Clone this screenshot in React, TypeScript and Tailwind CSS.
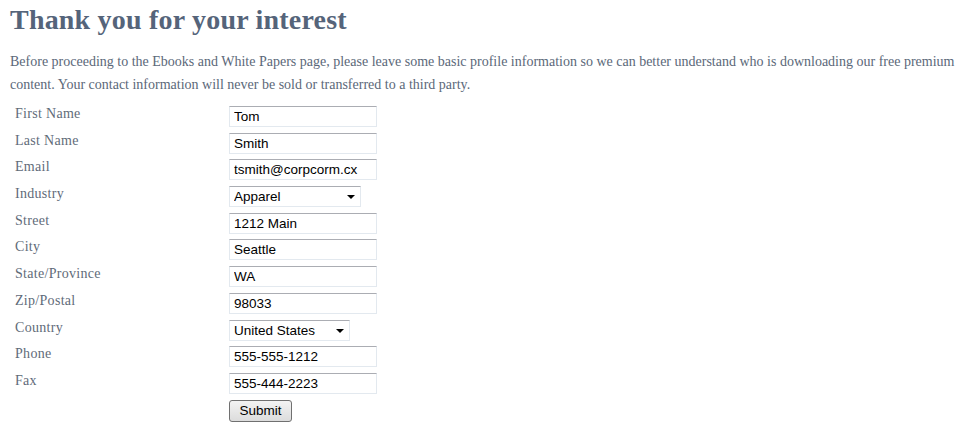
import React from "react";

const fields = [
  { label: "First Name", value: "Tom" },
  { label: "Last Name", value: "Smith" },
  { label: "Email", value: "tsmith@corpcorm.cx" },
  { label: "Industry", value: "Apparel", select: "w-[132px]" },
  { label: "Street", value: "1212 Main" },
  { label: "City", value: "Seattle" },
  { label: "State/Province", value: "WA" },
  { label: "Zip/Postal", value: "98033" },
  { label: "Country", value: "United States", select: "w-[121px]" },
  { label: "Phone", value: "555-555-1212" },
  { label: "Fax", value: "555-444-2223" },
];

const boxClass =
  "block h-[21px] border border-[#e3e9ef] border-t-[#abadb3] bg-white px-[4px] text-[13.5px] text-black outline-none font-['Liberation_Sans',Arial,sans-serif]";

const App = () => {
  return (
    <div className="min-h-[438px] w-[966px] bg-white font-['Liberation_Serif',serif] text-[#5b6879]">
      <div className="pl-[10px] pt-[3px]">
        <h1 className="text-[28px] font-bold leading-[34px] tracking-[0.2px] text-[#55647a]">
          Thank you for your interest
        </h1>
        <p className="mt-[13px] whitespace-nowrap text-[14px] leading-[23px]">
          Before proceeding to the Ebooks and White Papers page, please leave some basic profile information so we can better understand who is downloading our free premium
          <br />
          content. Your contact information will never be sold or transferred to a third party.
        </p>

        {/* Profile form */}
        <form className="mt-[10px] flex flex-col gap-y-[5.7px] pl-[5px]" onSubmit={(e) => e.preventDefault()}>
          {fields.map((f) => (
            <div key={f.label} className="grid h-[21px] grid-cols-[214px_1fr] items-start">
              <label className="text-[14px] leading-[16px] tracking-[0.3px] text-[#5f6b79]">{f.label}</label>
              {f.select ? (
                <div className={`relative h-[21px] ${f.select}`}>
                  <select
                    defaultValue={f.value}
                    className={`${boxClass} w-full appearance-none rounded-none`}
                  >
                    <option>{f.value}</option>
                  </select>
                  <span className="pointer-events-none absolute right-[6px] top-[9px] h-0 w-0 border-x-[4px] border-t-[4px] border-x-transparent border-t-black" />
                </div>
              ) : (
                <input defaultValue={f.value} className={`${boxClass} w-[148px]`} />
              )}
            </div>
          ))}
          <div className="grid h-[22px] grid-cols-[214px_1fr]">
            <span />
            <button
              type="submit"
              className="h-[22px] w-[63px] rounded-[3px] border border-[#707070] bg-gradient-to-b from-[#f3f3f3] to-[#dcdcdc] text-[13.5px] leading-[18px] text-black font-['Liberation_Sans',Arial,sans-serif]"
            >
              Submit
            </button>
          </div>
        </form>
      </div>
    </div>
  );
};

export default App;
